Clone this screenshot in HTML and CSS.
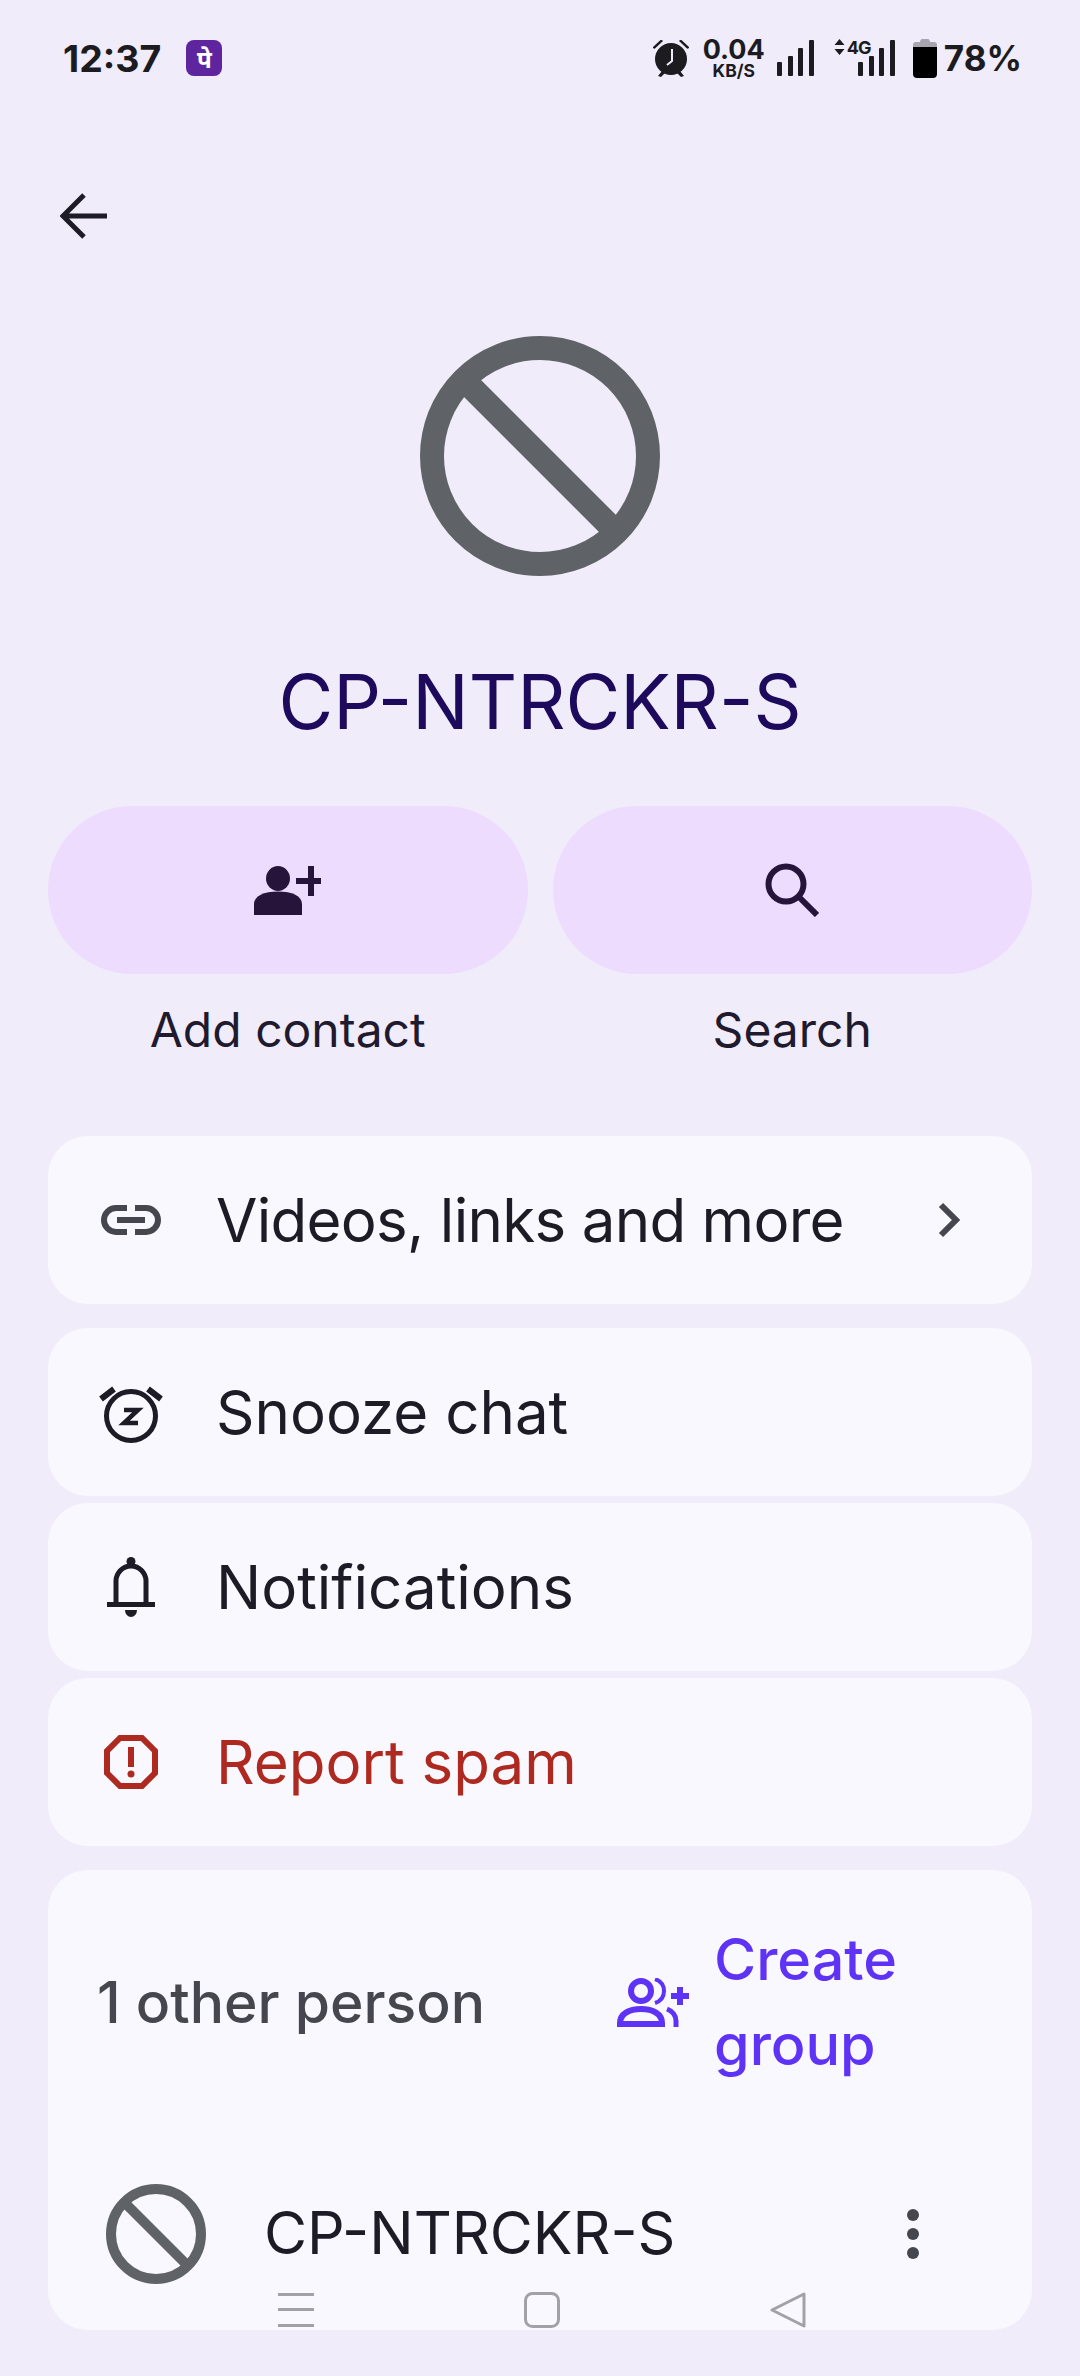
FILE: index.html
```html
<!DOCTYPE html>
<html lang="en">
<head>
  <meta charset="UTF-8" />
  <meta name="viewport" content="width=device-width, initial-scale=1.0" />
  <title>Group details</title>
  <link rel="stylesheet" href="styles.css">
</head>
<body>
  <div class="page">
    <header class="status">
      <div class="status-left">
        <span class="time">12:37</span>
        <span class="app-badge">पे</span>
      </div>
      <div class="status-right">
        <svg class="st-alarm" viewBox="0 0 38 38" width="38" height="38">
          <path d="M1 8 8 1.500c1-.7 2.500-.4 3 .5L3 9.500C2 10 .5 9 1 8ZM37 8l-7-6.500c-1-.7-2.500-.4-3 .5l8 7.500c1 .5 2.500-.500 2-1.500Z" fill="#1c1b1f"/>
          <circle cx="19" cy="20" r="16" fill="#1c1b1f"/>
          <path d="M6 37l4-5 3 2-4 4ZM32 37l-4-5-3 2 4 4Z" fill="#1c1b1f"/>
          <path d="M20 10v12l-5 4" fill="none" stroke="#f0ecfa" stroke-width="2"/>
        </svg>
        <div class="speed"><span class="speed-num">0.04</span><span class="speed-unit">KB/S</span></div>
        <svg class="st-bars" viewBox="0 0 38 38" width="38" height="38">
          <rect x="0" y="23" width="5" height="14" rx="1"/><rect x="11" y="17" width="5" height="20" rx="1"/><rect x="21" y="9" width="5" height="28" rx="1"/><rect x="32" y="1" width="5" height="36" rx="1"/>
        </svg>
        <div class="net">
          <svg viewBox="0 0 10 16" width="11" height="16"><path d="M5 0l5 6H0ZM5 16l5-6H0Z" fill="#1c1b1f"/></svg>
          <span class="net-label">4G</span>
          <svg class="net-bars" viewBox="0 0 38 38" width="38" height="38">
            <rect x="0" y="23" width="5" height="14" rx="1"/><rect x="11" y="17" width="5" height="20" rx="1"/><rect x="21" y="9" width="5" height="28" rx="1"/><rect x="32" y="1" width="5" height="36" rx="1"/>
          </svg>
        </div>
        <svg class="st-batt" viewBox="0 0 24 39" width="24" height="39">
          <path d="M7 3c0-1.500 1-3 2-3h6c1 0 2 1.500 2 3h4c2 0 3 1 3 3v3H0V6c0-2 1-3 3-3Z" fill="#a9a5b0"/>
          <path d="M0 8h24v27c0 2.500-1.500 4-4 4H4c-2.500 0-4-1.500-4-4Z" fill="#000"/>
        </svg>
        <span class="batt-pct">78%</span>
      </div>
    </header>

    <div class="topbar">
      <svg viewBox="0 0 48 48" width="48" height="48"><path d="M47 24H4M24 3 3 24l21 21" fill="none" stroke="#1c1b26" stroke-width="5"/></svg>
    </div>

    <div class="avatar-wrap">
      <svg class="block-icon" viewBox="0 0 240 240" width="240" height="240">
        <circle cx="120" cy="120" r="108" fill="none" stroke="#5f6368" stroke-width="24"/>
        <path d="M44 44 196 196" stroke="#5f6368" stroke-width="24"/>
      </svg>
    </div>

    <h1 class="title">CP-NTRCKR-S</h1>

    <div class="actions">
      <div class="action">
        <div class="action-btn">
          <svg viewBox="0 0 67 49" width="67" height="49" fill="#26143a">
            <ellipse cx="24" cy="12.500" rx="12" ry="12.500"/>
            <path d="M0 49V38c0-8 10-12.500 24-12.500S48 30 48 38v11Z"/>
            <path d="M42 12h12V0h6v12h7v6h-7v12h-6V18H42Z"/>
          </svg>
        </div>
        <span class="action-label">Add contact</span>
      </div>
      <div class="action">
        <div class="action-btn">
          <svg viewBox="0 0 54 54" width="54" height="54" fill="none" stroke="#26143a" stroke-width="6">
            <circle cx="21" cy="21" r="17.500"/>
            <path d="M33 33 52 52"/>
          </svg>
        </div>
        <span class="action-label">Search</span>
      </div>
    </div>

    <div class="card row first">
      <span class="row-icon">
        <svg viewBox="0 0 60 30" width="60" height="30" fill="none" stroke="#46464f" stroke-width="6">
          <path d="M26 3H15a12 12 0 0 0 0 24h11M34 3h11a12 12 0 0 1 0 24H34M16 15h28"/>
        </svg>
      </span>
      <span class="row-text tight">Videos, links and more</span>
      <svg class="chevron" viewBox="0 0 24 36" width="24" height="36"><path d="M5 3l15 15L5 33" fill="none" stroke="#46464f" stroke-width="6"/></svg>
    </div>

    <div class="rows">
      <div class="card row">
        <span class="row-icon">
          <svg class="snooze" viewBox="0 0 64 58" width="64" height="58" fill="none" stroke="#1c1b26" stroke-width="5">
            <circle cx="32" cy="31" r="24.500"/>
            <path d="M2 14 15 4M62 14 49 4" stroke-width="6"/>
            <path d="M25 25h14L25 38h14" stroke-width="4.500"/>
          </svg>
        </span>
        <span class="row-text">Snooze chat</span>
      </div>
      <div class="card row">
        <span class="row-icon">
          <svg viewBox="0 0 48 60" width="48" height="60" fill="#1c1b26">
            <circle cx="24" cy="4.500" r="4.500"/>
            <path d="M9 48V24a15 15 0 0 1 30 0v24" fill="none" stroke="#1c1b26" stroke-width="5"/>
            <rect x="0" y="45" width="48" height="5"/>
            <path d="M18 53h12a6 7 0 0 1-12 0Z"/>
          </svg>
        </span>
        <span class="row-text">Notifications</span>
      </div>
      <div class="card row">
        <span class="row-icon">
          <svg viewBox="0 0 54 54" width="54" height="54">
            <path d="M16 3h22l13 13v22L38 51H16L3 38V16Z" fill="none" stroke="#ae2a20" stroke-width="6"/>
            <rect x="24" y="12" width="6" height="20" fill="#ae2a20"/>
            <circle cx="27" cy="39" r="3.500" fill="#ae2a20"/>
          </svg>
        </span>
        <span class="row-text spam">Report spam</span>
      </div>
    </div>

    <section class="card group">
      <div class="group-head">
        <span class="group-count">1 other person</span>
        <div class="create">
          <svg viewBox="0 0 72 49" width="72" height="49" fill="none" stroke="#5f33f6" stroke-width="6">
            <circle cx="24" cy="13" r="10"/>
            <path d="M3 49v-4c0-9 9-14 21-14s21 5 21 14v1H3"/>
            <path d="M38 1c6 2 9 6 9 12s-3 10-9 12" stroke-width="4"/>
            <path d="M50 31c5 2 9 6 9 12v6" stroke-width="5"/>
            <path d="M54 18h18M63 9v18"/>
          </svg>
          <span class="create-text">Create group</span>
        </div>
      </div>
      <div class="person">
        <svg viewBox="0 0 100 100" width="100" height="100">
          <circle cx="50" cy="50" r="45" fill="none" stroke="#5f6368" stroke-width="10"/>
          <path d="M18 18 82 82" stroke="#5f6368" stroke-width="10"/>
        </svg>
        <span class="person-name">CP-NTRCKR-S</span>
        <svg class="more" viewBox="0 0 12 50" width="12" height="50" fill="#46464f">
          <circle cx="6" cy="6" r="6"/><circle cx="6" cy="25" r="6"/><circle cx="6" cy="44" r="6"/>
        </svg>
      </div>
    </section>

    <nav class="navbar">
      <svg viewBox="0 0 36 36" width="36" height="36" fill="#a3a1a8"><rect y="1" width="36" height="3"/><rect y="16" width="36" height="3"/><rect y="32" width="36" height="3"/></svg>
      <svg viewBox="0 0 36 36" width="36" height="36"><rect x="1.500" y="1.500" width="33" height="33" rx="7" fill="none" stroke="#a3a1a8" stroke-width="3"/></svg>
      <svg viewBox="0 0 36 36" width="36" height="36"><path d="M34 2 2 18l32 16Z" fill="none" stroke="#a3a1a8" stroke-width="3" stroke-linejoin="round"/></svg>
    </nav>
  </div>
</body>
</html>
```

FILE: styles.css
```css
* {
  box-sizing: border-box;
}
html, body {
  margin: 0;
  padding: 0;
}
body {
  font-family: Inter, "Noto Sans", sans-serif;
  background-color: #f0ecfa;
  color: #1c1b26;
}
svg {
  display: block;
  flex-shrink: 0;
}
.page {
  position: relative;
  width: 1080px;
  height: 2376px;
  overflow: hidden;
  padding: 0 48px;
}

/* status bar */
.status {
  display: flex;
  justify-content: space-between;
  align-items: center;
  height: 116px;
  margin: 0 -48px;
  padding: 0 58px 0 63px;
  color: #1c1b1f;
}
.status-left {
  display: flex;
  align-items: center;
  gap: 25px;
}
.time {
  font-size: 37.5px;
  font-weight: 700;
}
.app-badge {
  display: flex;
  justify-content: center;
  align-items: center;
  width: 36px;
  height: 36px;
  border-radius: 8px;
  background-color: #5f259f;
  color: white;
  font-family: "Noto Sans", sans-serif;
  font-size: 24px;
  font-weight: 700;
}
.status-right {
  display: flex;
  align-items: center;
}
.st-alarm {
  margin-right: 13px;
}
.speed {
  display: flex;
  flex-direction: column;
  align-items: center;
  margin-right: 12px;
  font-weight: 700;
}
.speed-num {
  font-size: 27px;
  line-height: 24px;
}
.speed-unit {
  font-size: 17.5px;
  line-height: 17px;
}
.st-bars, .net-bars {
  fill: #1c1b1f;
}
.net {
  position: relative;
  display: flex;
  justify-content: flex-end;
  width: 62px;
  height: 38px;
  margin: 0 17px 0 19px;
}
.net svg:first-child {
  position: absolute;
  left: 0;
  top: 0;
}
.net-label {
  position: absolute;
  left: 13px;
  top: 0;
  font-size: 18px;
  font-weight: 700;
  letter-spacing: -1px;
  line-height: 18px;
}
.st-batt {
  margin-right: 7px;
}
.batt-pct {
  font-size: 35px;
  font-weight: 700;
}

/* header */
.topbar {
  padding: 76px 0 0 12px;
}
.avatar-wrap {
  display: flex;
  justify-content: center;
  margin-top: 96px;
}
.title {
  margin: 82px 0 0;
  font-size: 75px;
  font-weight: 400;
  line-height: 88px;
  text-align: center;
  color: #1d0a5c;
}
.actions {
  display: flex;
  gap: 25px;
  margin-top: 60px;
}
.action {
  flex: 1;
  display: flex;
  flex-direction: column;
  align-items: center;
}
.action-btn {
  display: flex;
  justify-content: center;
  align-items: center;
  width: 100%;
  height: 168px;
  border-radius: 84px;
  background-color: #eedcfe;
}
.action-label {
  margin-top: 26px;
  font-size: 48px;
  line-height: 60px;
  color: #1f1a2e;
}

/* cards */
.card {
  background-color: #faf8ff;
  border-radius: 40px;
}
.row {
  display: flex;
  align-items: center;
  height: 168px;
  padding-right: 72px;
}
.first {
  margin-top: 76px;
}
.rows {
  display: flex;
  flex-direction: column;
  gap: 7px;
  margin-top: 24px;
}
.row-icon {
  display: flex;
  justify-content: center;
  width: 168px;
  padding-right: 2px;
}
.row-text {
  flex: 1;
  font-size: 60px;
  color: #1c1b26;
}
.tight {
  letter-spacing: -0.7px;
}
.spam {
  color: #ae2a20;
}
.snooze {
  margin-top: 4px;
}
.group {
  height: 460px;
  margin-top: 24px;
  padding: 47px 0 0 49px;
  overflow: hidden;
}
.group-head {
  display: flex;
  align-items: center;
}
.group-count {
  width: 520px;
  font-size: 57px;
  font-weight: 500;
  color: #46464f;
}
.create {
  display: flex;
  align-items: center;
  gap: 25px;
}
.create-text {
  width: 240px;
  font-size: 57.5px;
  font-weight: 500;
  line-height: 85px;
  color: #5f33f6;
}
.person {
  display: flex;
  align-items: center;
  margin-top: 97px;
  padding-left: 9px;
}
.person-name {
  width: 643px;
  margin: 0 0 3px 58px;
  font-size: 59px;
  color: #1c1b26;
}

/* gesture bar sits over the last card */
.navbar {
  position: absolute;
  left: 278px;
  top: 2292px;
  display: flex;
  gap: 210px;
}
```
